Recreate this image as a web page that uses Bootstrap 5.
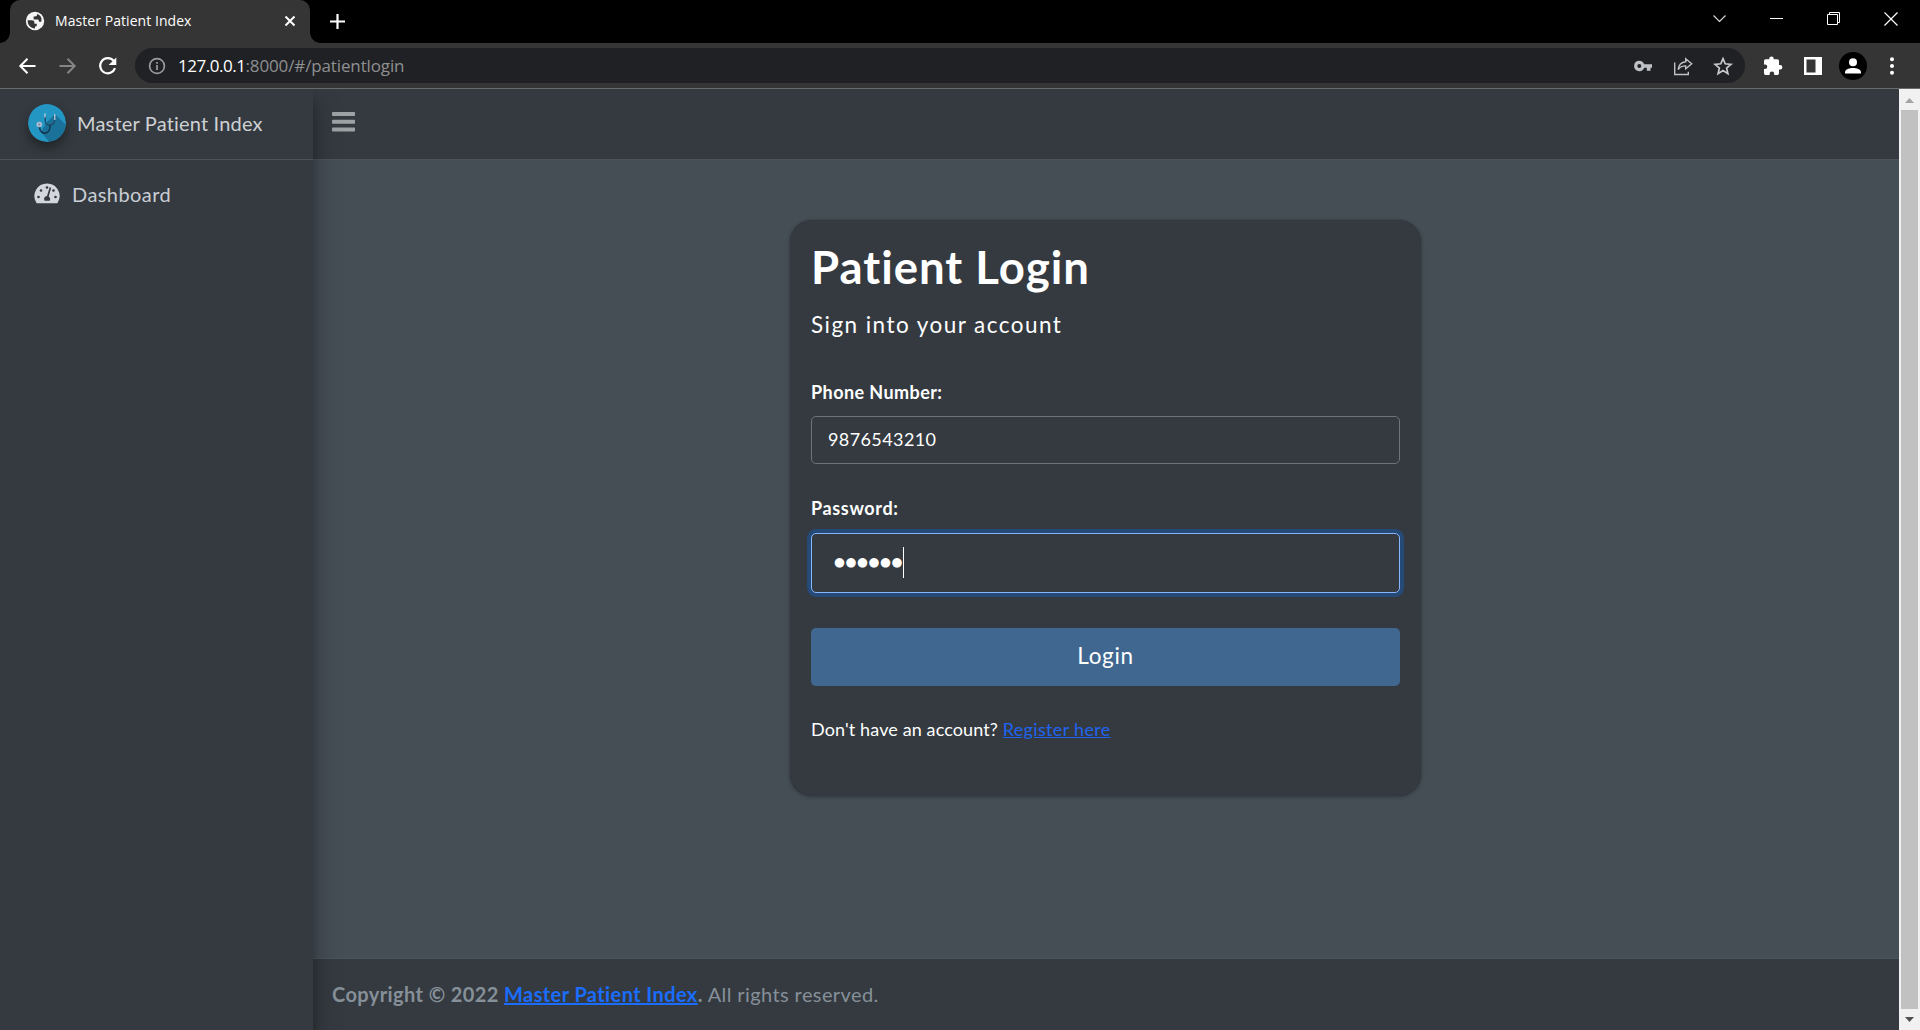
<!DOCTYPE html>
<html lang="en">
<head>
<meta charset="utf-8">
<title>Master Patient Index</title>
<link href="https://cdn.jsdelivr.net/npm/bootstrap@5.3.0/dist/css/bootstrap.min.css" rel="stylesheet">
<style>
html{font-size:20px}
body{height:1030px;overflow:hidden;font-family:Lato,"Noto Sans",sans-serif;font-variant-ligatures:none;background:#454d55;color:#fff;line-height:1.5}
svg{display:block;flex:none}
.chrome-ui{font-family:"Open Sans","Noto Sans",sans-serif}
.tabstrip{height:43px;background:#000;padding:0 22px 0 10px}
.browser-tab{position:relative;width:300px;height:43px;background:#353535;border-radius:10px 10px 0 0;padding:0 13px 2px 15px}
.browser-tab::before,.browser-tab::after{content:"";position:absolute;bottom:0;width:10px;height:10px}
.browser-tab::before{left:-10px;background:radial-gradient(circle at 0 0,#000 9.5px,#353535 10px)}
.browser-tab::after{right:-10px;background:radial-gradient(circle at 100% 0,#000 9.5px,#353535 10px)}
.tab-title{font-size:14px;margin-left:10px;line-height:20px;letter-spacing:.06px}
.new-tab{margin:0 0 1px 20px}
.win-buttons{gap:44px;padding-bottom:6px}
.toolbar{height:46px;background:#353535;border-bottom:1px solid #686b6a;padding-left:17px}
.nav-icons{gap:20px}
.omnibox{width:1610px;height:35px;border-radius:18px;background:#202124;margin-left:17px;padding:0 12px 0 13px}
.url{font-size:17px;line-height:24px;margin-left:12px;color:#8f9092;letter-spacing:-.13px}
.url-host{color:#fff;letter-spacing:-.47px}
.omni-icons{gap:20px}
.ext-puzzle{margin-left:18px}
.ext-panel{margin-left:20px}
.ext-avatar{margin-left:17px}
.ext-menu{margin-left:22px}
.side{width:313px;background:#343a40;box-shadow:0 14px 28px rgba(0,0,0,.25),0 10px 10px rgba(0,0,0,.22);z-index:2;clip-path:inset(0 -50px 0 0)}
.brand{height:71px;border-bottom:1px solid #4b545c;padding-left:28px}
.logo{width:38px;height:38px;border-radius:50%;box-shadow:0 6px 12px rgba(0,0,0,.4);margin-bottom:2px}
.brand-name{color:#ced1d4;margin:0 0 2px 11px;letter-spacing:.18px}
.side-link{color:#c9cdd4;padding:19px 0 0 34px;letter-spacing:.43px}
.side-link svg{margin:0 12px 2px 0}
.topnav{height:71px;background:#343a40;border-bottom:1px solid #4b545c;padding:23px 0 0 19px}
.login-card{width:631px;height:576px;margin:60px 0 0 477px;border-radius:22px;background:#343a40;padding:20px 21px;box-shadow:0 0 1px rgba(0,0,0,.3),0 1px 4px rgba(0,0,0,.25)}
.title{font-size:45.500px;line-height:54px;font-weight:700;margin:0;letter-spacing:1px}
.sub{font-size:22.500px;line-height:30px;margin:16px 0 39px;letter-spacing:1.450px}
.lab{font-size:18px;line-height:27px;font-weight:700;display:block;margin-bottom:10px;letter-spacing:.43px}
.lab-pass{margin:31px 0 11px;letter-spacing:.65px}
.field{display:flex;align-items:center;background:#343a40;border:1px solid #6c757d;border-radius:5px;color:#fff;font-size:18px;height:48px;padding:0 16px 1px;letter-spacing:.4px}
.field-pass{height:60px;border-color:#86b7fe;box-shadow:0 0 0 4px #264a78;padding:0 22px 1px}
.dots{font-family:"DejaVu Sans",sans-serif;font-size:12.500px;letter-spacing:.6px}
.caret{width:1px;height:31px;background:#fff}
.btn-login,.btn-login:hover{height:58px;background:#406790;color:#fff;font-size:22.500px;border-radius:5px;border:0;padding:0 0 2px;margin-top:35px;letter-spacing:.7px}
.reg{font-size:18px;line-height:27px;margin-top:30px;letter-spacing:.12px}
.reg a{letter-spacing:.33px;color:#1f64f0}
.foot{height:72px;background:#343a40;border-top:1px solid #4b545c;color:#869099;padding:0 0 2px 19px;letter-spacing:.4px}
.foot a{color:#1a6dfd}
.sbar{width:21px;background:#f1f1f1}
.thumb{background:#c1c1c1;width:17px}
</style>
</head>
<body class="d-flex flex-column">
<div class="tabstrip chrome-ui d-flex align-items-center flex-shrink-0">
  <div class="browser-tab d-flex align-items-center">
    <svg width="20" height="20" viewBox="0 0 20 20"><circle cx="10" cy="10" r="9.2" fill="#f5f5f5"/><path d="M2.6 9.3h4.2c1.8 0 2.6.9 2.6 2.2v1.3h2.4v1.4c0 1-.8 1.4-1.8 1.4v1.8C5.600 17.400 2.600 14 2.600 9.300zM12.200 3.100c0 1.600-.6 2.300-2.200 2.300H8.600v2c0 .7.400 1 1.200 1h2.600c1 0 1.500.6 1.500 1.500v.8h2.400c.9-3.700-.7-6.500-4.100-7.600z" fill="#353535"/></svg>
    <span class="tab-title">Master Patient Index</span>
    <svg class="ms-auto" width="14" height="14" viewBox="0 0 14 14" stroke="#fff" stroke-width="2"><path d="M2.500 2.500l9 9M11.500 2.500l-9 9"/></svg>
  </div>
  <svg class="new-tab" width="15" height="15" viewBox="0 0 15 15" stroke="#fff" stroke-width="2.200"><path d="M7.500 0v15M0 7.500h15"/></svg>
  <div class="win-buttons d-flex align-items-center ms-auto">
    <svg width="13" height="13" viewBox="0 0 13 13" fill="none" stroke="#ddd" stroke-width="1.100"><path d="M.5 3.500l6 6 6-6"/></svg>
    <svg width="13" height="13" viewBox="0 0 13 13" stroke="#fff"><path d="M0 6.500h13"/></svg>
    <svg width="13" height="13" viewBox="0 0 13 13" fill="none" stroke="#fff"><path d="M.5 2.500h10v10H.5zM2.500 2.500v-2h10v10h-2"/></svg>
    <svg width="14" height="14" viewBox="0 0 14 14" stroke="#fff" stroke-width="1.200"><path d="M.5.5l13 13M13.500.5l-13 13"/></svg>
  </div>
</div>
<div class="toolbar chrome-ui d-flex align-items-center flex-shrink-0">
  <div class="nav-icons d-flex">
    <svg width="20" height="20" viewBox="0 0 20 20" fill="none" stroke="#fff" stroke-width="2"><path d="M18.500 10H4M10.500 2.800L3.300 10l7.200 7.200"/></svg>
    <svg width="20" height="20" viewBox="0 0 20 20" fill="none" stroke="#858585" stroke-width="2"><path d="M2.500 10H17M10.500 2.800l7.200 7.200-7.200 7.200"/></svg>
    <svg width="21" height="20" viewBox="0 0 21 20"><path d="M16.600 4.800A7.600 7.600 0 1 0 18 12.200" fill="none" stroke="#fff" stroke-width="2.200"/><path d="M19.300 1.500v7.600h-7.600z" fill="#fff"/></svg>
  </div>
  <div class="omnibox d-flex align-items-center">
    <svg width="18" height="18" viewBox="0 0 18 18" fill="none" stroke="#9a9c9f" stroke-width="1.700"><circle cx="9" cy="9" r="7.400"/><path d="M9 8v5M9 5v1.800"/></svg>
    <span class="url"><span class="url-host">127.0.0.1</span>:8000/#/patientlogin</span>
    <div class="omni-icons d-flex align-items-center ms-auto">
      <svg width="20" height="20" viewBox="0 0 20 20"><path fill="#bdc1c6" fill-rule="evenodd" d="M6.300 4.700a5.200 5.200 0 1 0 4.900 7h2.600v3h3.700v-3H19V8.200h-7.800a5.200 5.200 0 0 0-4.900-3.500zm0 3.200a2 2 0 1 1 0 4 2 2 0 0 1 0-4z"/></svg>
      <svg width="20" height="20" viewBox="0 0 20 20" fill="none" stroke="#bdc1c6" stroke-width="1.400"><path d="M1.700 6.500v12h13.600v-2.800"/><path d="M12.700 2.800l6 5-6 5V9.900c-3.400 0-5.700 1-7.500 3.600.5-4.300 2.900-7.200 7.500-7.700z"/></svg>
      <svg width="20" height="20" viewBox="0 0 20 20" fill="none" stroke="#c6c9cd" stroke-width="1.700"><path d="M10 2.600l2.200 5.200 5.700.5-4.300 3.700 1.300 5.600-4.900-3-4.900 3 1.300-5.600-4.300-3.700 5.700-.5z"/></svg>
    </div>
  </div>
  <svg class="ext-puzzle" width="21" height="20" viewBox="0 0 21 20" fill="#fff"><path d="M17.200 9H16V4.900a1.600 1.600 0 0 0-1.600-1.600h-3.700V2.600a2.200 2.200 0 0 0-4.400 0v.7H2.600A1.600 1.600 0 0 0 1 4.900v3.600h1a2.300 2.300 0 0 1 0 4.600H1v4.200A1.600 1.600 0 0 0 2.600 18.900h4v-1a2.300 2.300 0 0 1 4.600 0v1h3.200a1.600 1.600 0 0 0 1.600-1.600v-3.900h1.200a2.200 2.200 0 0 0 0-4.400z"/></svg>
  <svg width="18" height="18" viewBox="0 0 18 18" class="ext-panel"><path d="M0 0h18v18H0z" fill="#fff"/><path d="M2.500 2.500h9v13h-9z" fill="#353535"/></svg>
  <svg width="28" height="28" viewBox="0 0 28 28" class="ext-avatar"><circle cx="14" cy="14" r="14"/><circle cx="14" cy="10.300" r="4" fill="#fff"/><path d="M6 21.500v-1.300c0-3.200 4.700-4.300 8-4.300s8 1.100 8 4.300v1.300z" fill="#fff"/></svg>
  <svg width="6" height="18" viewBox="0 0 6 18" fill="#fff" class="ext-menu"><circle cx="3" cy="2.200" r="2"/><circle cx="3" cy="9" r="2"/><circle cx="3" cy="15.800" r="2"/></svg>
</div>
<div class="d-flex flex-fill">
  <aside class="side flex-shrink-0">
    <div class="brand d-flex align-items-center">
      <svg class="logo" viewBox="0 0 38 38"><defs><clipPath id="disc"><circle cx="19" cy="19" r="19"/></clipPath></defs><g clip-path="url(#disc)"><path d="M0 0h38v38H0z" fill="#2496c4"/><path d="M27 10l14 14v16H23L13 28l5-9z" fill="#1a7199"/></g><path d="M17.500 12c-1 6 0 9 4 9s6-3 5-9" fill="none" stroke="#1f4f6d" stroke-width="1.500"/><path d="M22 21c1 10-10 11-10.500 2" fill="none" stroke="#14384f" stroke-width="1.600"/><path d="M17 9.500v4M26.800 10v6" stroke="#c5d8e2" stroke-width="1.200"/><circle cx="11.300" cy="20.500" r="2.800" fill="#b5bfd0"/><circle cx="11.300" cy="20.500" r="1.200" fill="#7f8fb0"/></svg>
      <span class="brand-name">Master Patient Index</span>
    </div>
    <div class="side-link d-flex align-items-center">
      <svg width="26" height="21" viewBox="0 0 26 21"><path d="M13 .5A12.500 12.500 0 0 0 2.200 19.400c.3.600.7.900 1.300.9h19c.6 0 1-.3 1.300-.9A12.500 12.500 0 0 0 13 .5z" fill="#d3d6dd"/><g fill="#343a40"><circle cx="13" cy="4.500" r="1.300"/><circle cx="7" cy="7.500" r="1.300"/><circle cx="4.500" cy="14" r="1.300"/><circle cx="21.500" cy="14" r="1.300"/><circle cx="19.500" cy="7.500" r="1.300"/><path d="M15.700 4.300l1.500.5-2.500 8.800c1.700 1.200 1.700 2.700 1.100 4.200h-5.300c-1-2.400 0-4.500 2.500-4.700z"/></g></svg>
      <span>Dashboard</span>
    </div>
  </aside>
  <div class="flex-fill d-flex flex-column">
    <nav class="topnav"><svg width="23" height="20" viewBox="0 0 23 20" fill="#9ea2a5"><rect width="23" height="4" rx=".8"/><rect y="7.700" width="23" height="4" rx=".8"/><rect y="15.500" width="23" height="4" rx=".8"/></svg></nav>
    <main class="flex-fill">
      <div class="login-card">
        <h1 class="title">Patient Login</h1>
        <p class="sub">Sign into your account</p>
        <label class="lab">Phone Number:</label>
        <div class="field">9876543210</div>
        <label class="lab lab-pass">Password:</label>
        <div class="field field-pass"><span class="dots">●●●●●●</span><span class="caret"></span></div>
        <button class="btn btn-login w-100">Login</button>
        <p class="reg mb-0">Don't have an account? <a href="#">Register here</a></p>
      </div>
    </main>
    <footer class="foot d-flex align-items-center"><span><b>Copyright © 2022 <a href="#">Master Patient Index</a>.</b> All rights reserved.</span></footer>
  </div>
  <div class="sbar d-flex flex-column align-items-center flex-shrink-0">
    <svg width="21" height="21" viewBox="0 0 21 21"><path d="M6 14l4.500-5 4.500 5z" fill="#a3a3a3"/></svg>
    <div class="thumb flex-fill"></div>
    <svg width="21" height="21" viewBox="0 0 21 21"><path d="M6 8l4.500 5L15 8z" fill="#505050"/></svg>
  </div>
</div>
<script src="https://cdn.jsdelivr.net/npm/bootstrap@5.3.0/dist/js/bootstrap.bundle.min.js"></script>
</body>
</html>
